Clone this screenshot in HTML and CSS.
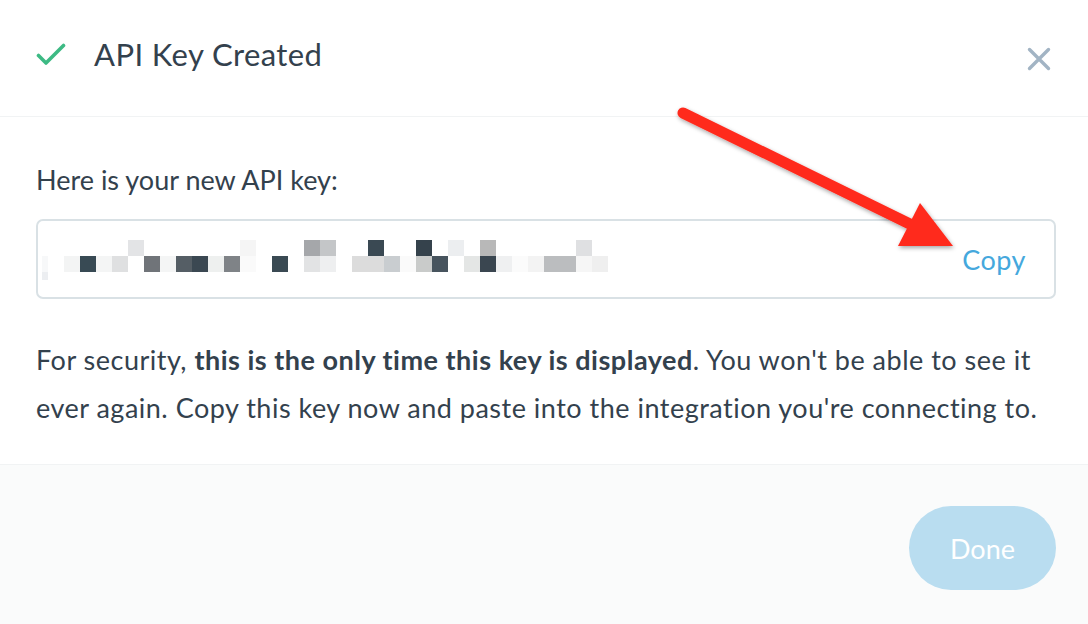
FILE: index.html
```html
<!DOCTYPE html>
<html>
<head>
<meta charset="utf-8">
<link rel="stylesheet" href="styles.css">
</head>
<body>
<div class="modal">
  <header class="modal-header">
    <div class="title-group">
      <svg class="check" width="32" height="26" viewBox="0 0 32 26"><path d="M2.5 12.5 L10 20 L27.5 2.5" fill="none" stroke="#3dba84" stroke-width="3.6" stroke-linecap="round" stroke-linejoin="round"/></svg>
      <h1 class="title">API Key Created</h1>
    </div>
    <svg class="close" width="26" height="26" viewBox="0 0 26 26"><path d="M3.5 3.5 L22.5 22.5 M22.5 3.5 L3.5 22.5" stroke="#a2b4c4" stroke-width="3.4" stroke-linecap="round"/></svg>
  </header>
  <section class="modal-body">
    <p class="label">Here is your new API key:</p>
    <div class="key-field">
      <div class="key-pixels">
        <div class="px-row row1">
          <span></span><span></span><span></span><span></span><span style="background:#e3e4e6"></span><span></span><span></span><span></span><span></span><span></span><span></span><span style="background:#f5f5f5"></span><span></span><span></span><span></span><span style="background:#a5a7aa"></span><span style="background:#c4c6c8"></span><span></span><span></span><span style="background:#3a4953"></span><span></span><span></span><span style="background:#35424c"></span><span></span><span style="background:#eceef0"></span><span></span><span style="background:#b8b8b8"></span><span></span><span></span><span></span><span></span><span></span><span style="background:#dfe0e2"></span>
        </div>
        <div class="px-row row2">
          <i class="sliver"></i><span style="background:#f3f4f4"></span><span style="background:#384a54"></span><span style="background:#f4f5f5"></span><span style="background:#dfe0e1"></span><span></span><span style="background:#707479"></span><span style="background:#f4f5f5"></span><span style="background:#555e65"></span><span style="background:#3b4852"></span><span style="background:#eef0ef"></span><span style="background:#7f8387"></span><span style="background:#fafafa"></span><span></span><span style="background:#3a4a53"></span><span></span><span style="background:#e2e3e4"></span><span style="background:#eeeff0"></span><span></span><span style="background:#dcdcdc"></span><span style="background:#dcdcdc"></span><span style="background:#c9cdd0"></span><span style="background:#fafafa"></span><span style="background:#c9cbca"></span><span style="background:#47545e"></span><span></span><span style="background:#e4e6e5"></span><span style="background:#3a4650"></span><span style="background:#eff0f1"></span><span style="background:#fbfbfb"></span><span style="background:#f3f3f3"></span><span style="background:#bbbdbf"></span><span style="background:#bbbdbf"></span><span style="background:#f6f6f6"></span><span style="background:#efefef"></span>
        </div>
      </div>
      <span class="copy">Copy</span>
    </div>
    <p class="notice">For security, <strong>this is the only time this key is displayed</strong>. You won't be able to see it ever again. Copy this key now and paste into the integration you're connecting to.</p>
  </section>
  <footer class="modal-footer">
    <button class="done">Done</button>
  </footer>
  <svg class="arrow" width="1088" height="624" viewBox="0 0 1088 624">
    <defs>
      <filter id="sh" x="-20%" y="-20%" width="140%" height="140%">
        <feDropShadow dx="1" dy="2" stdDeviation="2" flood-color="#000" flood-opacity="0.35"/>
      </filter>
    </defs>
    <g filter="url(#sh)" fill="#ff2a1e">
      <line x1="683" y1="113" x2="918" y2="228" stroke="#ff2a1e" stroke-width="11" stroke-linecap="round"/>
      <polygon points="920,203 953,246 898,246"/>
    </g>
  </svg>
</div>
</body>
</html>
```
FILE: styles.css
```css
* { box-sizing: border-box; }
html, body { margin: 0; padding: 0; background: #fff; }
body {
  font-family: Lato, "Open Sans", sans-serif;
  color: #33414d;
  width: 1088px;
  height: 624px;
  overflow: hidden;
}
.modal {
  position: relative;
  width: 1088px;
  height: 624px;
  display: flex;
  flex-direction: column;
}
.modal-header {
  height: 117px;
  border-bottom: 1px solid #f1f3f4;
  display: flex;
  align-items: flex-start;
  justify-content: space-between;
  padding: 0 36px 0 36px;
}
.title-group {
  display: flex;
  align-items: center;
  margin-top: 36px;
}
.check { display: block; margin-top: 4px; }
.title {
  margin: 0 0 0 26px;
  font-size: 31px;
  letter-spacing: 0.4px;
  font-weight: 400;
  line-height: 36px;
  color: #33414d;
}
.close { display: block; margin-top: 46px; }
.modal-body {
  padding: 46px 32px 32px 36px;
}
.label {
  margin: 0;
  font-size: 27px;
  line-height: 34px;
}
.key-field {
  margin-top: 22px;
  height: 80px;
  border: 2px solid #d9e1e5;
  border-radius: 7px;
  display: flex;
  align-items: flex-start;
  justify-content: space-between;
  padding: 19px 28px 0 0;
}
.key-pixels {
  display: flex;
  flex-direction: column;
}
.px-row { display: flex; height: 16px; }
.px-row span { width: 16px; height: 16px; flex: none; }
.row1 { padding-left: 26px; }
.row2 { padding-left: 4px; }
.sliver {
  display: block;
  width: 6px;
  height: 24px;
  margin-right: 16px;
  background: linear-gradient(#f7f8f9 0 16px, #eceef1 16px);
}
.copy {
  font-size: 27px;
  line-height: 34px;
  color: #45a8dd;
  margin-top: 3px;
  letter-spacing: 0.5px;
}
.notice {
  margin: 37px 0 0 0;
  font-size: 27px;
  line-height: 48px;
  letter-spacing: 0.5px;
}
.notice strong { font-weight: 700; }
.modal-footer {
  flex: 1;
  background: #fafbfb;
  border-top: 1px solid #f1f3f4;
  display: flex;
  justify-content: flex-end;
  align-items: flex-start;
  padding: 41px 32px 0 0;
}
.done {
  width: 147px;
  height: 84px;
  border: none;
  border-radius: 42px;
  background: #b9ddf0;
  color: #fff;
  font-family: Lato, "Open Sans", sans-serif;
  font-size: 27px;
  font-weight: 400;
  padding: 0;
}
.arrow {
  position: absolute;
  left: 0;
  top: 0;
  pointer-events: none;
}
```
